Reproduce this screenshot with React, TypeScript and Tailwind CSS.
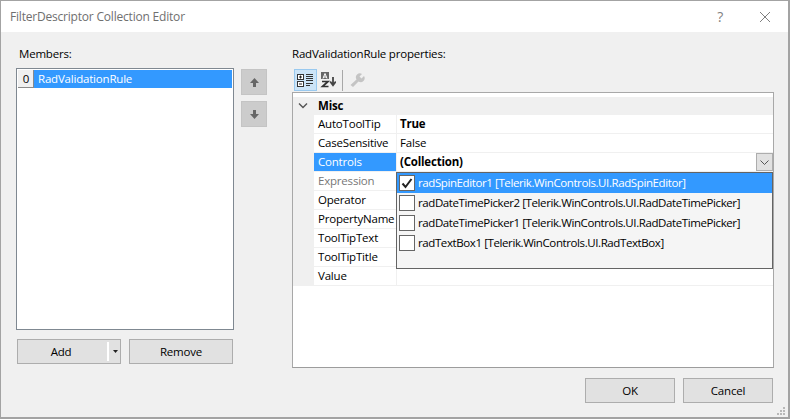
import React from "react";

const rows = [
  { n: "AutoToolTip", v: "True", bold: true },
  { n: "CaseSensitive", v: "False" },
  { n: "Controls", v: "(Collection)", bold: true, sel: true },
  { n: "Expression", v: "", gray: true },
  { n: "Operator", v: "" },
  { n: "PropertyName", v: "" },
  { n: "ToolTipText", v: "" },
  { n: "ToolTipTitle", v: "" },
  { n: "Value", v: "" },
];
const items = [
  { t: "radSpinEditor1 [Telerik.WinControls.UI.RadSpinEditor]", on: true },
  { t: "radDateTimePicker2 [Telerik.WinControls.UI.RadDateTimePicker]" },
  { t: "radDateTimePicker1 [Telerik.WinControls.UI.RadDateTimePicker]" },
  { t: "radTextBox1 [Telerik.WinControls.UI.RadTextBox]" },
];

function Btn({ label, cls }: { label: string; cls: string }) {
  return (
    <div className={`flex items-center justify-center h-[25px] border border-[#adadad] bg-[#e1e1e1] text-black ${cls}`}>
      {label}
    </div>
  );
}

function Arrow({ up }: { up?: boolean }) {
  return (
    <div className="w-[26px] h-[26px] bg-[#cccccc] border border-[#c4c4c4] flex items-center justify-center">
      <svg width="11" height="11" viewBox="0 0 11 11" className={up ? "" : "rotate-180"}>
        <path d="M5.5 1 L10 6 L7 6 L7 10 L4 10 L4 6 L1 6 Z" fill="#666" />
      </svg>
    </div>
  );
}

export default function App() {
  return (
    <div className="relative w-[790px] h-[419px] flex flex-col bg-[#f0f0f0] border-l border-t border-r-2 border-b-2 border-[#a3a3a3] text-[11.5px] leading-[16px] text-black overflow-hidden font-['Open_Sans','Noto_Sans',sans-serif] tracking-[-0.2px]">
      {/* title bar */}
      <div className="h-[31px] shrink-0 bg-white flex items-center pl-[9px] pr-[17px]">
        <span className="text-[#6f6f6f] text-[12px]">FilterDescriptor Collection Editor</span>
        <span className="ml-auto text-[#808080] text-[14px] mr-[36px]">?</span>
        <svg width="12" height="12" viewBox="0 0 12 12" className="mt-[1px]">
          <path d="M1 1 L11 11 M11 1 L1 11" stroke="#808080" strokeWidth="1" />
        </svg>
      </div>

      {/* main */}
      <div className="flex-1 flex flex-col">
        <div className="flex pl-[15px] pr-[15px] pt-[14px]">
          {/* left */}
          <div className="w-[218px] shrink-0 flex flex-col">
            <div className="h-[22px] pl-[3px]">Members:</div>
            <div className="w-[218px] h-[262px] bg-white border border-[#7f8891] p-[1px]">
              <div className="flex h-[18px] items-stretch bg-[#3399ff] text-white">
                <div className="w-[16px] pl-[1px] flex items-center justify-center bg-[#f0f0f0] border-r border-b border-[#8a8a8a] text-black">0</div>
                <div className="pl-[4px] flex items-center">RadValidationRule</div>
              </div>
            </div>
            <div className="flex mt-[9px] ml-[1px] gap-[8px]">
              <div className="relative w-[104px]">
                <Btn label="Add" cls="w-[104px] pr-[16px]" />
                <div className="absolute left-[90px] top-[3px] w-[2px] h-[19px] bg-white" />
                <svg width="5" height="3" viewBox="0 0 5 3" className="absolute left-[96px] top-[11px]">
                  <path d="M0 0 H5 L2.5 3 Z" fill="#222" />
                </svg>
              </div>
              <Btn label="Remove" cls="w-[104px]" />
            </div>
          </div>

          {/* arrows */}
          <div className="w-[58px] shrink-0 pl-[7px] pt-[23px] flex flex-col gap-[6px]">
            <Arrow up />
            <Arrow />
          </div>

          {/* right */}
          <div className="w-[482px] shrink-0 flex flex-col">
            <div className="h-[16px]">RadValidationRule properties:</div>
            <div className="h-[24px] mt-[6px] flex items-center pl-[2px] bg-[#f0f0f0]">
              <div className="w-[23px] h-[22px] bg-[#cce4f7] border border-[#99c9ef] flex items-center justify-center">
                <svg width="17" height="15" viewBox="0 0 17 15">
                  <rect x="0.5" y="1.5" width="6" height="5" fill="#fff" stroke="#333" />
                  <rect x="0.5" y="8.5" width="6" height="5" fill="#fff" stroke="#333" />
                  <path d="M2 4H5M3.5 2.5V5.5M2 11H5" stroke="#222" />
                  <path d="M9 1.5H16M9 3.5H16M9 5.5H16M9 7.5H16M9 10.5H16M9 12.5H13" stroke="#333" />
                </svg>
              </div>
              <svg width="16" height="16" viewBox="0 0 16 16" className="ml-[3px]">
                <rect x="1" y="0" width="8" height="7" fill="#666" />
                <path d="M3 6.5 L5 1.5 L7 6.5 M3.7 5H6.3" stroke="#fff" fill="none" />
                <path d="M2 9.5H8L2.5 14.5H8.5" stroke="#333" strokeWidth="1.7" fill="none" />
                <path d="M13 5V13M10.2 9.5L13 13.2L15.8 9.5" stroke="#444" strokeWidth="1.8" fill="none" />
              </svg>
              <div className="w-px h-[21px] bg-[#a8a8a8] ml-[6px]" />
              <svg width="16" height="16" viewBox="0 0 16 16" className="ml-[6px]">
                <path d="M1.5 13 L7.5 7.5 A4 4 0 0 1 13 2 L10.5 4.5 L12.5 6.5 L15 4 A4 4 0 0 1 9.5 9.5 L4 15 Z" fill="#c4c4c4" />
              </svg>
            </div>
            {/* grid */}
            <div className="relative h-[276px] bg-white border border-[#a8a8a8] border-b-[#9c9c9c]">
              <div className="flex flex-col pt-[4px]">
                <div className="h-[18px] flex items-center bg-[#f0f0f0]">
                  <svg width="10" height="6" viewBox="0 0 10 6" className="ml-[5px]">
                    <path d="M1 0.5 L5 4.5 L9 0.5" stroke="#555" strokeWidth="1.4" fill="none" />
                  </svg>
                  <span className="ml-[10px] font-bold">Misc</span>
                </div>
                {rows.map((r) => (
                  <div key={r.n} className="h-[19px] flex bg-[#f0f0f0]">
                    <div className="w-[21px] shrink-0" />
                    <div
                      className={`w-[82px] shrink-0 pl-[4px] flex items-center whitespace-nowrap overflow-hidden border-b border-[#f0f0f0] ${
                        r.sel ? "bg-[#3399ff] text-white" : r.gray ? "bg-white text-[#777]" : "bg-white"
                      }`}
                    >
                      {r.n}
                    </div>
                    <div className="w-px shrink-0 bg-[#f0f0f0]" />
                    <div className={`flex-1 pl-[3px] flex items-center bg-white border-b border-[#f0f0f0] ${r.bold ? "font-bold" : ""}`}>
                      {r.v}
                    </div>
                  </div>
                ))}
              </div>

              {/* dropdown button */}
              <div className="absolute right-0 top-[60px] w-[17px] h-[18px] bg-[#e1e1e1] border border-[#adadad] flex items-center justify-center">
                <svg width="9" height="5" viewBox="0 0 9 5">
                  <path d="M0.5 0.5 L4.5 4.5 L8.5 0.5" stroke="#555" fill="none" />
                </svg>
              </div>

              {/* popup */}
              <div className="absolute left-[103px] right-0 top-[79px] h-[97px] bg-[#f5f5f5] border border-[#646464] tracking-[-0.4px]">
                {items.map((it) => (
                  <div key={it.t} className={`h-[20px] flex items-center pl-[2px] whitespace-nowrap ${it.on ? "bg-[#3399ff] text-white" : "text-black"}`}>
                    <div className="w-[16px] h-[16px] shrink-0 bg-white border border-[#666] flex items-center justify-center">
                      {it.on && (
                        <svg width="12" height="11" viewBox="0 0 12 11">
                          <path d="M1.5 5.5 L4.5 9 L10.5 1" stroke="#222" strokeWidth="2" fill="none" />
                        </svg>
                      )}
                    </div>
                    <span className="ml-[3px]">{it.t}</span>
                  </div>
                ))}
              </div>
            </div>
          </div>
        </div>

        {/* footer */}
        <div className="flex justify-end gap-[8px] pr-[15px] mt-[10px]">
          <Btn label="OK" cls="w-[90px]" />
          <Btn label="Cancel" cls="w-[90px]" />
        </div>
      </div>

      {/* resize grip */}
      <svg width="9" height="9" viewBox="0 0 9 9" className="absolute right-[2px] bottom-[1px]">
        <path d="M6 0h2v2h-2zM3 3h2v2h-2zM6 3h2v2h-2zM0 6h2v2h-2zM3 6h2v2h-2zM6 6h2v2h-2z" fill="#b8b8b8" />
      </svg>
    </div>
  );
}
